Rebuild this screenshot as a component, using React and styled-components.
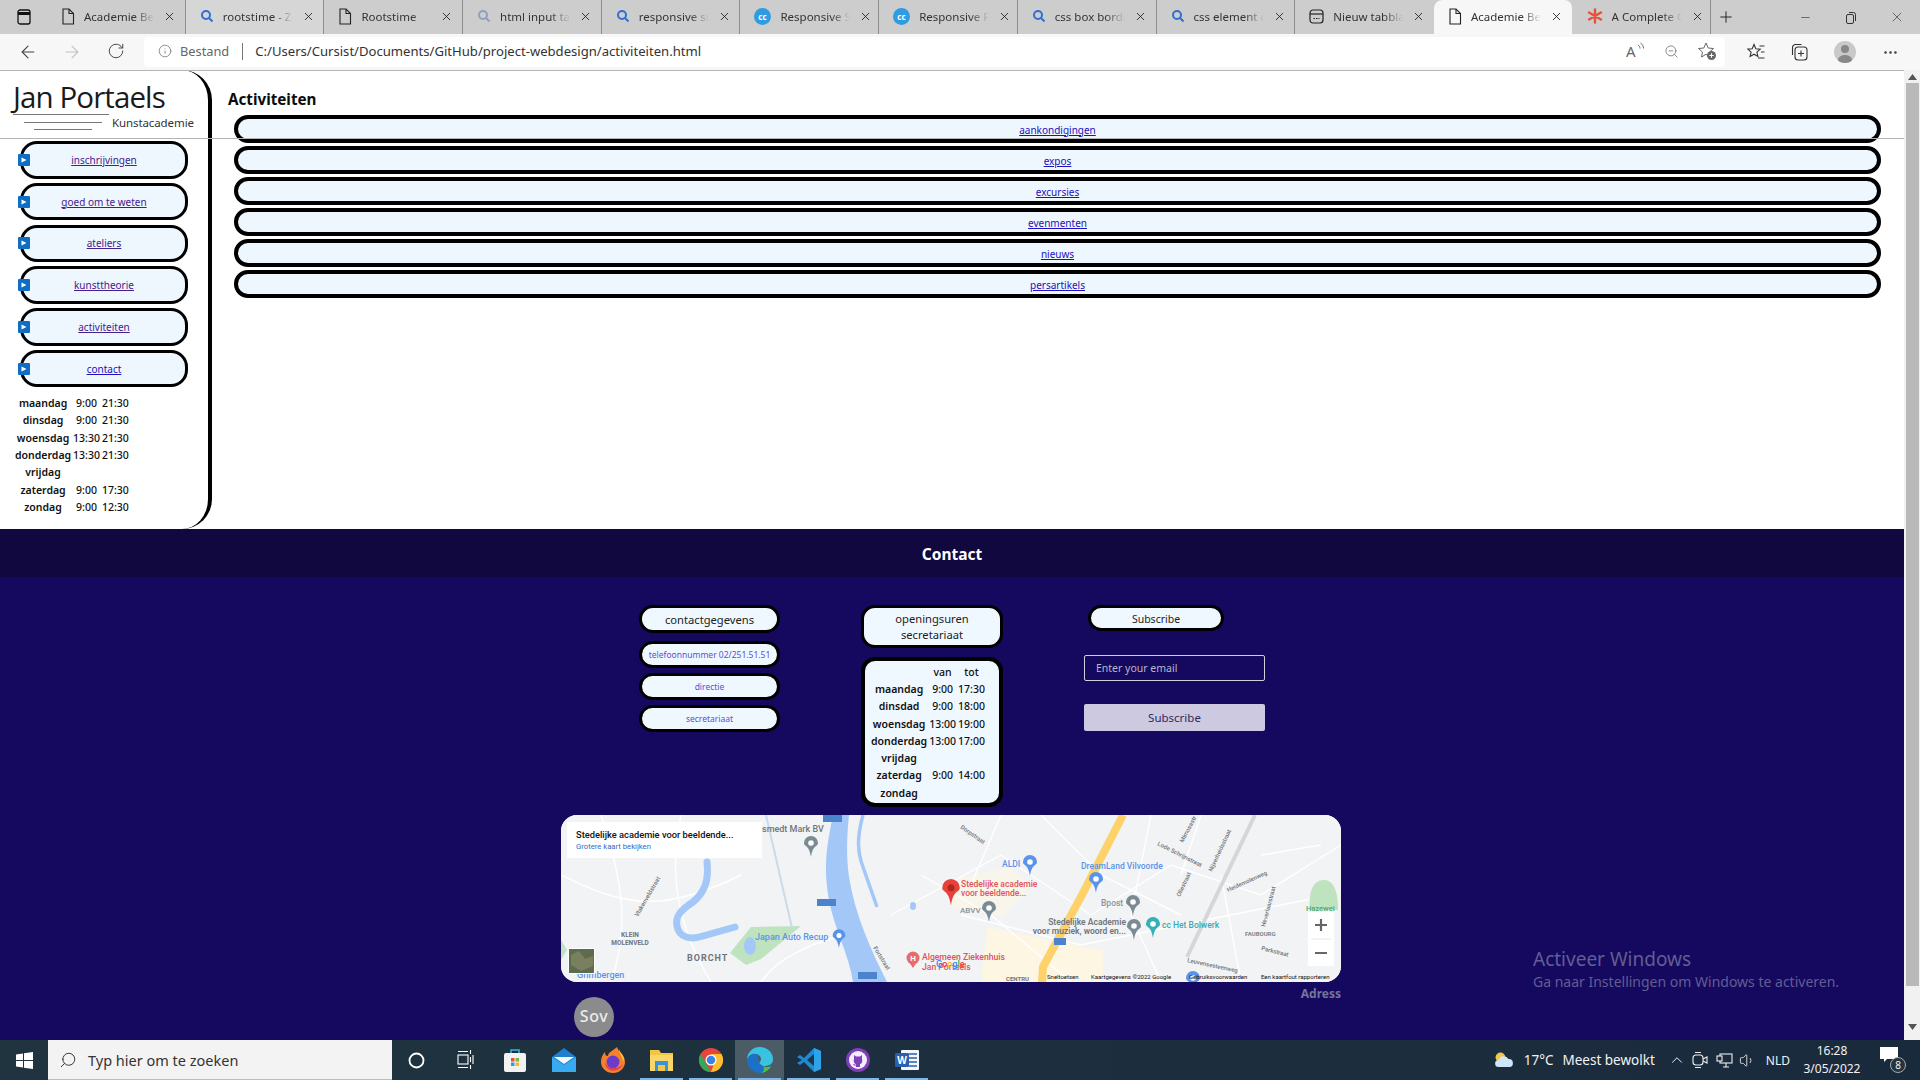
import styled, { createGlobalStyle } from 'styled-components';
import {
  ArrowLeft,
  ArrowRight,
  ChevronUp,
  Ellipsis,
  Info,
  Minus,
  Plus,
  RotateCw,
  Search,
  Volume1,
  X,
  ZoomOut,
} from 'lucide-react';

const FONT = '"Noto Sans", "Open Sans", sans-serif';

const GlobalStyle = createGlobalStyle`
  html, body { margin: 0; padding: 0; height: 100%; overflow: hidden; background: #fff; }
  body { font-family: ${FONT}; }
  * { box-sizing: border-box; }
`;

const Screen = styled.div`
  width: 1920px;
  height: 1080px;
  display: flex;
  flex-direction: column;
  overflow: hidden;
`;

/* browser chrome */
const TabBar = styled.div`
  height: 34px;
  background: #cdcdcd;
  display: flex;
  align-items: stretch;
  flex: none;
`;

const TabMenu = styled.div`
  width: 47px;
  display: flex;
  align-items: center;
  justify-content: center;
`;

const Tab = styled.div`
  width: 138.7px;
  flex: none;
  height: 34px;
  position: relative;
  display: flex;
  align-items: center;
  padding: 0 0 2px 14px;
  gap: 9px;
  background: ${(p) => (p.$active ? '#f7f7f7' : p.$hover ? '#d6d6d6' : 'transparent')};
  border-radius: ${(p) => (p.$active ? '8px 8px 0 0' : '0')};
  border-right: 1px solid ${(p) => (p.$active || p.$noLine ? 'transparent' : '#8e8e8e')};
  background-clip: padding-box;
`;

const TabTitle = styled.span`
  width: 70px;
  font-size: 11.5px;
  color: #333;
  white-space: nowrap;
  overflow: hidden;
  -webkit-mask-image: linear-gradient(to right, #000 72%, transparent 100%);
  mask-image: linear-gradient(to right, #000 72%, transparent 100%);
`;

const TabClose = styled.span`
  display: flex;
  color: #222;
`;

const NewTab = styled.div`
  width: 30px;
  display: flex;
  align-items: center;
  justify-content: center;
`;

const WindowControls = styled.div`
  margin-left: auto;
  display: flex;
  align-items: center;
`;

const WindowButton = styled.div`
  width: 46px;
  display: flex;
  justify-content: center;
  color: #333;
`;

const Toolbar = styled.div`
  height: 36px;
  background: #f7f7f7;
  display: flex;
  align-items: center;
  flex: none;
`;

const NavButton = styled.div`
  width: 44px;
  display: flex;
  justify-content: center;
  color: ${(p) => (p.$off ? '#c0c0c0' : '#444')};
`;

const NavGroup = styled.div`
  display: flex;
  padding-left: 6px;
  width: 144px;
`;

const AddressBar = styled.div`
  width: 1581px;
  height: 30px;
  background: #fff;
  border-radius: 4px;
  display: flex;
  align-items: center;
  padding: 0 0 2px 14px;
  font-size: 13.1px;
  color: #333;
`;

const Bestand = styled.span`
  margin-left: 8px;
  font-size: 12.800px;
  color: #666;
`;

const AddressSep = styled.span`
  width: 1px;
  height: 17px;
  background: #777;
  margin: 0 12px 0 13px;
`;

const AddressIcons = styled.div`
  margin-left: auto;
  display: flex;
  gap: 18px;
  padding-right: 8px;
  color: #666;
  align-items: center;
`;

const ToolIcons = styled.div`
  display: flex;
  align-items: center;
  color: #333;
  flex: 1;
  padding-left: 22px;
  gap: 26px;
`;

const Avatar = styled.div`
  width: 22px;
  height: 22px;
  border-radius: 50%;
  background: #c9c9c9;
  overflow: hidden;
`;

/* page */
const Viewport = styled.div`
  flex: 1;
  min-height: 0;
  display: flex;
  position: relative;
`;

const Page = styled.div`
  flex: 1;
  min-width: 0;
  display: flex;
  flex-direction: column;
  position: relative;
  overflow: hidden;
`;

const Scrollbar = styled.div`
  width: 16px;
  background: #f1f1f1;
  display: flex;
  flex-direction: column;
  align-items: center;
  color: #555;
  padding-top: 4px;
`;

const ScrollThumb = styled.div`
  width: 13px;
  height: 903px;
  background: #b9b9b9;
  margin: 3px 0 38px;
`;

const TopLine = styled.div`
  position: absolute;
  left: 0;
  right: 0;
  top: ${(p) => p.$top}px;
  height: 1px;
  background: #b4b4b4;
  z-index: 3;
`;

const TopSection = styled.div`
  height: 459px;
  flex: none;
  display: flex;
  background: #fff;
`;

const Sidebar = styled.aside`
  width: 212px;
  flex: none;
  border-right: 4px solid #000;
  border-radius: 0 30px 30px 0;
  display: flex;
  flex-direction: column;
`;

const Logo = styled.div`
  height: 71px;
  position: relative;
  padding: 7px 0 0 13px;
`;

const LogoName = styled.div`
  font-family: "Open Sans", sans-serif;
  font-weight: 400;
  font-size: 29.5px;
  line-height: 40px;
  letter-spacing: -0.9px;
  color: #1a1a1a;
`;

const LogoSub = styled.span`
  position: absolute;
  left: 112px;
  top: 45px;
  font-size: 11.5px;
  letter-spacing: -0.1px;
  color: #333;
`;

const LogoRule = styled.span`
  position: absolute;
  left: ${(p) => p.$left}px;
  top: ${(p) => p.$top}px;
  width: ${(p) => p.$width}px;
  height: 1px;
  background: #777;
`;

const SideNav = styled.nav`
  display: flex;
  flex-direction: column;
  gap: 4.3px;
  padding-left: 20px;
`;

const NavPill = styled.div`
  width: 168px;
  height: 37.5px;
  position: relative;
  border: 3px solid #000;
  border-radius: 17px;
  background: #eef6fe;
  display: flex;
  align-items: center;
  justify-content: center;
`;

const PillMarker = styled.span`
  position: absolute;
  left: -5px;
  top: 50%;
  margin-top: -6px;
  width: 12px;
  height: 12px;
  background: #0f6dc4;
  display: flex;
  align-items: center;
  justify-content: center;
  border-radius: 1px;
`;

const PageLink = styled.a`
  font-size: ${(p) => p.$size || 10}px;
  color: ${(p) => (p.$visited ? '#44208f' : '#1c10c0')};
  text-decoration: underline;
`;

const HoursTable = styled.table`
  border-collapse: separate;
  border-spacing: 2px 0;
  font-size: 10.5px;
  font-weight: 600;
  color: #111;
  text-align: center;

  td, th {
    padding: 0;
    height: 17.3px;
    font-weight: 600;
    white-space: nowrap;
  }
  td:nth-child(2), td:nth-child(3) {
    font-weight: 500;
  }
`;

const SideHours = styled.div`
  margin: 7px 0 0 13px;
`;

const Content = styled.main`
  flex: 1;
  min-width: 0;
  padding: 17px 23px 0 22px;
`;

const PageTitle = styled.h1`
  margin: 0 0 4px -6px;
  font-size: 15.2px;
  line-height: 24px;
  font-weight: 700;
  color: #0c0c0c;
`;

const BarList = styled.div`
  display: flex;
  flex-direction: column;
  gap: 3px;
`;

const BarLink = styled.div`
  height: 28px;
  border: 4px solid #000;
  border-radius: 14px;
  background: #eef6fe;
  display: flex;
  align-items: center;
  justify-content: center;
  padding-top: 1px;
`;

/* footer */
const Footer = styled.footer`
  flex: 1;
  min-height: 0;
  background: #14095e;
  display: flex;
  flex-direction: column;
`;

const FooterBand = styled.div`
  height: 48px;
  flex: none;
  padding-top: 2px;
  background: #110840;
  color: #fff;
  font-size: 15.5px;
  font-weight: 700;
  display: flex;
  align-items: center;
  justify-content: center;
`;

const FooterColumns = styled.div`
  display: flex;
  justify-content: center;
  gap: 81px;
  height: 238px;
  padding-top: 28px;
  flex: none;
`;

const ContactCol = styled.div`
  width: 141px;
  display: flex;
  flex-direction: column;
  gap: 5px;
`;

const HoursCol = styled.div`
  width: 142px;
  display: flex;
  flex-direction: column;
  gap: 9px;
`;

const SubscribeCol = styled.div`
  width: 181px;
  display: flex;
  flex-direction: column;
`;

const FooterPill = styled.div`
  height: ${(p) => p.$height}px;
  width: ${(p) => p.$width || '100%'};
  margin-left: ${(p) => p.$left || 0}px;
  margin-bottom: ${(p) => p.$below || 0}px;
  padding-top: 1px;
  border: 3px solid #000;
  border-radius: 14px;
  background: #f0f8ff;
  display: flex;
  align-items: center;
  justify-content: center;
  text-align: center;
  font-size: ${(p) => p.$size || 11.2}px;
  line-height: 16px;
  color: ${(p) => p.$color || '#222'};
  white-space: nowrap;
  flex: none;
`;

const HoursCard = styled.div`
  height: 150px;
  border: 4px solid #000;
  border-radius: 14px;
  background: #f0f8ff;
  display: flex;
  justify-content: center;
  padding: 2px 8px 0 0;
`;

const EmailInput = styled.input`
  height: 26px;
  margin-top: 24px;
  border: 1px solid #d0cfe0;
  border-radius: 2px;
  background: transparent;
  padding: 0 11px;
  font-family: ${FONT};
  font-size: 10.5px;
  color: #fff;

  &::placeholder {
    color: #b9b7cc;
    opacity: 1;
  }
`;

const SubscribeButton = styled.button`
  height: 27px;
  margin-top: 23px;
  border: none;
  border-radius: 2px;
  background: #cdc9e0;
  font-family: ${FONT};
  font-size: 11.5px;
  color: #2f2a5c;
`;

const MapArea = styled.div`
  width: 780px;
  margin-left: 561px;
  flex: none;
`;

const MapFrame = styled.div`
  width: 780px;
  height: 167px;
  border-radius: 16px;
  overflow: hidden;
  background: #f2f3f5;
`;

const MapSvg = styled.svg`
  display: block;
  font-family: Roboto, sans-serif;
`;

const MapFoot = styled.div`
  display: flex;
  justify-content: space-between;
  align-items: flex-start;
  padding-left: 13px;
`;

const SovBadge = styled.div`
  width: 40px;
  height: 40px;
  margin-top: 15px;
  border-radius: 50%;
  background: #8b8a8c;
  color: #ececec;
  font-size: 16px;
  font-weight: 500;
  display: flex;
  align-items: center;
  justify-content: center;
  letter-spacing: 0.6px;
  padding-bottom: 3px;
`;

const AddressLabel = styled.span`
  margin-top: 3px;
  font-size: 12px;
  font-weight: 700;
  color: #77749b;
`;

const ActivateNote = styled.div`
  position: absolute;
  left: 1533px;
  top: 876px;
  color: #625d93;
  z-index: 2;
`;

const ActivateTitle = styled.div`
  font-size: 19px;
  line-height: 26px;
`;

const ActivateText = styled.div`
  font-size: 14px;
  line-height: 20px;
`;

/* taskbar */
const Taskbar = styled.div`
  height: 40px;
  flex: none;
  display: flex;
  align-items: center;
  background: linear-gradient(to right, #20343f, #1a2a3d);
  color: #fff;
`;

const StartButton = styled.div`
  width: 48px;
  display: flex;
  justify-content: center;
`;

const SearchBox = styled.div`
  width: 344px;
  height: 40px;
  background: #f3f3f3;
  border-bottom: 1px solid #bbb;
  display: flex;
  align-items: center;
  padding-left: 11px;
  gap: 11px;
  color: #333;
  font-size: 14.5px;
`;

const TaskItem = styled.div`
  width: 49px;
  height: 40px;
  flex: none;
  position: relative;
  display: flex;
  align-items: center;
  justify-content: center;
  background: ${(p) => (p.$active ? '#4c5c66' : 'transparent')};

  &::after {
    content: '';
    display: ${(p) => (p.$running ? 'block' : 'none')};
    position: absolute;
    bottom: 0;
    left: 3px;
    right: 3px;
    height: 2px;
    background: #7cb9ea;
  }
`;

const Tray = styled.div`
  margin-left: auto;
  display: flex;
  align-items: center;
  height: 40px;
  font-size: 14px;
  color: #f2f2f2;
`;

const TrayText = styled.span`
  margin-left: ${(p) => p.$left || 0}px;
  font-size: ${(p) => p.$size || 13.5}px;
  white-space: nowrap;
`;

const TrayIcon = styled.span`
  display: flex;
  margin-left: ${(p) => p.$left || 0}px;
`;

const Clock = styled.div`
  width: 72px;
  margin-left: 6px;
  text-align: center;
  font-size: 12px;
  line-height: 18px;
`;

const NotifyWrap = styled.div`
  position: relative;
  width: 26px;
  height: 26px;
  margin: 0 14px 0 12px;
`;

const NotifyCount = styled.span`
  position: absolute;
  right: 0;
  bottom: 0;
  width: 16px;
  height: 16px;
  border-radius: 50%;
  border: 1px solid #aaa;
  background: #25323f;
  font-size: 10px;
  line-height: 14px;
  text-align: center;
`;

const PageIcon = () => (
  <svg width="14" height="17" viewBox="0 0 14 17" fill="none" stroke="#222" strokeWidth="1.1">
    <path d="M2 1h6l4.500 4.500V16H2z" />
    <path d="M8 1v4.500h4.500" />
  </svg>
);

const SearchTabIcon = ({ faded }) => (
  <svg width="14" height="14" viewBox="0 0 14 14" fill="none" stroke={faded ? '#8c9fc0' : '#2f6fd0'} strokeWidth="2">
    <circle cx="6" cy="6" r="4" />
    <path d="M9 9l3.500 3.500" />
  </svg>
);

const CcIcon = () => (
  <svg width="17" height="17" viewBox="0 0 17 17">
    <circle cx="8.500" cy="8.500" r="8.500" fill="#2f9be0" />
    <text x="8.500" y="11.500" fontSize="8" fontWeight="700" fill="#fff" textAnchor="middle" fontFamily="Noto Sans">cc</text>
  </svg>
);

const NewTabIcon = () => (
  <svg width="15" height="15" viewBox="0 0 15 15" fill="none" stroke="#222" strokeWidth="1.2">
    <rect x="1" y="1" width="13" height="13" rx="3" />
    <path d="M1 5h13" />
    <path d="M4.500 9.500h6" strokeDasharray="1.500 1" />
  </svg>
);

const AsteriskIcon = () => (
  <svg width="16" height="16" viewBox="0 0 16 16" stroke="#e8503a" strokeWidth="2.400" strokeLinecap="round">
    <path d="M8 1.500v13M2 4.500l12 7M14 4.500l-12 7" />
  </svg>
);

const RestoreIcon = () => (
  <svg width="12" height="13" viewBox="0 0 12 13" fill="none" stroke="#333" strokeWidth="1">
    <rect x="1.500" y="3.500" width="7" height="9" rx="1.500" />
    <path d="M4 1.500h4.500a2 2 0 0 1 2 2V10" />
  </svg>
);

const ReadAloudIcon = () => (
  <svg width="20" height="18" viewBox="0 0 20 18" fill="none" stroke="#666" strokeWidth="1">
    <text x="0" y="15" fontSize="15" fill="#666" stroke="none" fontFamily="Noto Sans">A</text>
    <path d="M12 3c1.500 1 2 2 2 3.500M14.500 1c2 1.500 3 3 3 5.500" />
  </svg>
);

const StarPlusIcon = () => (
  <svg width="20" height="20" viewBox="0 0 20 20" fill="none" stroke="#666" strokeWidth="1">
    <path d="M9 2l2.200 5 5.300.5-4 3.500 1 5-4.500-2.700L4.500 16l1-5-4-3.500L6.800 7z" />
    <circle cx="14.500" cy="14.500" r="4.500" fill="#666" stroke="none" />
    <path d="M14.500 12.300v4.400M12.300 14.500h4.400" stroke="#fff" />
  </svg>
);

const FavoritesIcon = () => (
  <svg width="18" height="18" viewBox="0 0 18 18" fill="none" stroke="#333" strokeWidth="1.100">
    <path d="M7 1.500l1.800 4.200 4.400.4-3.300 3 1 4.400L7 11.200l-3.900 2.300 1-4.400-3.300-3 4.400-.4z" />
    <path d="M12.500 3h5M14 9h3.500M11 15h6.500" />
  </svg>
);

const CollectionsIcon = () => (
  <svg width="17" height="18" viewBox="0 0 17 18" fill="none" stroke="#333" strokeWidth="1.100">
    <rect x="4" y="4" width="12" height="13" rx="3" />
    <path d="M10 7.500v6M7 10.500h6" />
    <path d="M1.500 12V5a3 3 0 0 1 3-3.500h6" />
  </svg>
);

const ScrollDown = () => (
  <svg width="9" height="6" viewBox="0 0 9 6" fill="#555">
    <path d="M0 0h9L4.500 6z" />
  </svg>
);

const ScrollUp = () => (
  <svg width="9" height="6" viewBox="0 0 9 6" fill="#555">
    <path d="M0 6h9L4.500 0z" />
  </svg>
);

const TABS = [
  { icon: <PageIcon />, title: 'Academie Beeldende' },
  { icon: <SearchTabIcon />, title: 'rootstime - Zoeken', hover: true },
  { icon: <PageIcon />, title: 'Rootstime' },
  { icon: <SearchTabIcon faded />, title: 'html input tag' },
  { icon: <SearchTabIcon />, title: 'responsive sidebar' },
  { icon: <CcIcon />, title: 'Responsive Sidebar' },
  { icon: <CcIcon />, title: 'Responsive Footer' },
  { icon: <SearchTabIcon />, title: 'css box border' },
  { icon: <SearchTabIcon />, title: 'css element center' },
  { icon: <NewTabIcon />, title: 'Nieuw tabblad', noLine: true },
  { icon: <PageIcon />, title: 'Academie Beeldende', active: true },
  { icon: <AsteriskIcon />, title: 'A Complete Guide' },
];

const NAV = [
  { label: 'inschrijvingen', visited: true },
  { label: 'goed om te weten', visited: true },
  { label: 'ateliers', visited: true },
  { label: 'kunsttheorie', visited: true },
  { label: 'activiteiten', visited: true },
  { label: 'contact', visited: false },
];

const ACTIVITIES = ['aankondigingen', 'expos', 'excursies', 'evenmenten', 'nieuws', 'persartikels'];

const SIDE_HOURS = [
  ['maandag', '9:00', '21:30'],
  ['dinsdag', '9:00', '21:30'],
  ['woensdag', '13:30', '21:30'],
  ['donderdag', '13:30', '21:30'],
  ['vrijdag', '', ''],
  ['zaterdag', '9:00', '17:30'],
  ['zondag', '9:00', '12:30'],
];

const OFFICE_HOURS = [
  ['', 'van', 'tot'],
  ['maandag', '9:00', '17:30'],
  ['dinsdad', '9:00', '18:00'],
  ['woensdag', '13:00', '19:00'],
  ['donderdag', '13:00', '17:00'],
  ['vrijdag', '', ''],
  ['zaterdag', '9:00', '14:00'],
  ['zondag', '', ''],
];

const Hours = ({ rows }) => (
  <HoursTable>
    <tbody>
      {rows.map((row, i) => (
        <tr key={i}>
          {row.map((cell, j) => (
            <td key={j}>{cell}</td>
          ))}
        </tr>
      ))}
    </tbody>
  </HoursTable>
);

const MapPin = ({ x, y, color, size = 1, dot = '#fff' }) => (
  <g transform={`translate(${x} ${y}) scale(${size})`}>
    <path d="M0 9C-2-4-7-1-7-5a7 7 0 1 1 14 0C7-1 2-4 0 9z" fill={color} />
    <circle cx="0" cy="-5" r="2.800" fill={dot} />
  </g>
);

const MapLabel = ({ x, y, color = '#70757a', size = 8, weight = 500, anchor = 'start', rotate, spacing, children }) => (
  <text
    x={x}
    y={y}
    fill={color}
    fontSize={size}
    fontWeight={weight}
    textAnchor={anchor}
    letterSpacing={spacing}
    transform={rotate ? `rotate(${rotate} ${x} ${y})` : undefined}
  >
    {children}
  </text>
);

const RoadShield = ({ x, y, label, w = 19 }) => (
  <g>
    <rect x={x} y={y} width={w} height="7" fill="#4d82cc" />
    <text x={x + w / 2} y={y + 5.500} fontSize="5" fill="#fff" textAnchor="middle">{label}</text>
  </g>
);

// google maps embed, redrawn
const MapDrawing = () => (
  <MapSvg width="780" height="167" viewBox="0 0 780 167">
    <rect width="780" height="167" fill="#f2f3f5" />
    <path d="M426 112l116 24v31H420z" fill="#fdf6e3" />
    <path d="M400 62l50-10 20 20-30 30-50-10z" fill="#f8f5ea" />
    <g fill="none" stroke="#fff" strokeWidth="1.400">
      <path d="M0 60C60 90 100 100 180 60M40 0c20 60 30 110 10 167M120 0c-10 50-10 100 30 167M200 167c20-30 60-40 90-50" />
      <path d="M330 100l110-60 90 60 80-50 90 30 80-50M360 60l70 40 80 67M440 0l-30 70M590 0l-20 100 30 67M660 60l20 107" />
      <path d="M400 100l120 30 100-20 150-30M480 0l60 60 80 40M640 0l-20 60M700 40l60-10" />
    </g>
    <path d="M272 0C266 30 262 50 268 85c4 25 20 55 24 82h34C310 135 294 100 288 62 285 40 286 20 288 0z" fill="#a3c7f7" />
    <path d="M302 0c-6 22-6 36 0 52l14 40" fill="none" stroke="#a3c7f7" strokeWidth="3.500" />
    <path d="M146 47c2 18-2 30-14 40-12 8-18 14-16 24 2 12 14 14 26 10l32-9" fill="none" stroke="#a3c7f7" strokeWidth="7" strokeLinecap="round" />
    <path d="M169 138l21-26 50-1-40 33-15 6z" fill="#bfe3bf" />
    <ellipse cx="189" cy="131" rx="6" ry="9" fill="#a3c7f7" />
    <path d="M205 0l26 113" stroke="#c9dbe8" strokeWidth="2" fill="none" />
    <ellipse cx="352" cy="91" rx="3" ry="4" fill="#a3c7f7" />
    <path d="M694 0L626 142" stroke="#d5d6da" strokeWidth="4" fill="none" />
    <path d="M562 0L522 78 482 152l-1 15" stroke="#fdd26a" strokeWidth="8" fill="none" />
    <path d="M749 95c-2-20 4-30 14-30s14 12 14 30z" fill="#bfe3bf" />
    <path d="M0 125l6 10-6 10z" fill="#bfe3bf" />

    <MapLabel x="201" y="17" size="9">smedt Mark BV</MapLabel>
    <MapPin x="250" y="33" color="#7b8b94" />
    <MapLabel x="69" y="122" size="6.500" weight={700} anchor="middle">KLEIN</MapLabel>
    <MapLabel x="69" y="129.500" size="6.500" weight={700} anchor="middle">MOLENVELD</MapLabel>
    <MapLabel x="126" y="146" size="9" weight={700} spacing="1">BORCHT</MapLabel>
    <MapLabel x="194" y="125" size="9" color="#5a93ea">Japan Auto Recup</MapLabel>
    <MapPin x="278" y="125" color="#5a93ea" size="0.900" />
    <MapLabel x="16" y="163" size="9" color="#5a93ea">Grimbergen</MapLabel>
    <MapLabel x="77" y="102" size="6" rotate="-60">Vlakenveldstraat</MapLabel>
    <MapLabel x="312" y="133" size="6" rotate="58">Fortstraat</MapLabel>
    <RoadShield x="262" y="0" label="N260" />
    <RoadShield x="256" y="84" label="N260" />
    <RoadShield x="297" y="157" label="N260" />
    <RoadShield x="493" y="123" label="R1" w="12" />

    <MapPin x="390" y="79" color="#e8403a" size="1.250" dot="#b3261e" />
    <MapLabel x="400" y="72" size="8.500" color="#e0545a">Stedelijke academie</MapLabel>
    <MapLabel x="400" y="81" size="8.500" color="#e0545a">voor beeldende...</MapLabel>
    <MapLabel x="399" y="98" size="8" color="#8a9299">ABVV</MapLabel>
    <MapPin x="428" y="98" color="#7b8b94" />
    <MapLabel x="441" y="52" size="8.500" color="#5a93ea">ALDI</MapLabel>
    <MapPin x="469" y="52" color="#5a93ea" />
    <MapLabel x="520" y="54" size="8.500" color="#5a93ea">DreamLand Vilvoorde</MapLabel>
    <MapPin x="535" y="69" color="#5a93ea" />
    <MapLabel x="540" y="91" size="8.500" color="#8a9299">Bpost</MapLabel>
    <MapPin x="572" y="92" color="#7b8b94" />
    <MapLabel x="565" y="110" size="8.500" weight={600} anchor="end">Stedelijke Academie</MapLabel>
    <MapLabel x="565" y="119" size="8.500" weight={600} anchor="end">voor muziek, woord en...</MapLabel>
    <MapPin x="573" y="116" color="#7b8b94" />
    <MapPin x="592" y="114" color="#35b0b8" />
    <MapLabel x="601" y="113" size="8.500" color="#35aab4">cc Het Bolwerk</MapLabel>
    <MapLabel x="684" y="121" size="6" weight={700} color="#80868b">FAUBOURG</MapLabel>
    <MapLabel x="745" y="96" size="7.500" color="#4aa76a">Hazewei</MapLabel>
    <MapLabel x="361" y="145" size="8.600" color="#e0545a">Algemeen Ziekenhuis</MapLabel>
    <MapLabel x="361" y="155" size="8.600" color="#e0545a">Jan Portaels</MapLabel>
    <circle cx="352" cy="143" r="6.500" fill="#e86a6a" />
    <path d="M352 153l-4-6h8z" fill="#e86a6a" />
    <text x="352" y="146" fontSize="8" fontWeight="700" fill="#fff" textAnchor="middle">H</text>
    <text x="375" y="152" fontSize="9" fontWeight="500">
      <tspan fill="#4285f4">G</tspan>
      <tspan fill="#ea4335">o</tspan>
      <tspan fill="#fbbc05">o</tspan>
      <tspan fill="#4285f4">g</tspan>
      <tspan fill="#34a853">l</tspan>
      <tspan fill="#ea4335">e</tspan>
    </text>
    <MapLabel x="596" y="30" size="6" rotate="27">Lode Schrijnstraat</MapLabel>
    <MapLabel x="651" y="57" size="6" rotate="-65">Nijverheidsstraat</MapLabel>
    <MapLabel x="667" y="77" size="6" rotate="-24">Heidemolenweg</MapLabel>
    <MapLabel x="704" y="112" size="6" rotate="-75">Heverlaarstraat</MapLabel>
    <MapLabel x="619" y="82" size="6" rotate="-65">Oliestraat</MapLabel>
    <MapLabel x="622" y="28" size="6" rotate="-62">Mimosastr</MapLabel>
    <MapLabel x="399" y="13" size="6" rotate="35">Dorpstraat</MapLabel>
    <MapLabel x="626" y="147" size="6" rotate="12">Leuvensesteenweg</MapLabel>
    <MapLabel x="700" y="135" size="6" rotate="14">Parkstraat</MapLabel>
    <MapLabel x="445" y="166" size="6" weight={700}>CENTRU</MapLabel>
    <MapPin x="632" y="168" color="#5a93ea" />

    <rect x="6" y="7" width="195" height="36" fill="#fff" />
    <text x="15" y="22.500" fontSize="9.300" fill="#111" fontWeight="500">Stedelijke academie voor beeldende...</text>
    <text x="15" y="34" fontSize="7.700" fill="#3a67c8">Grotere kaart bekijken</text>

    <rect x="7" y="133" width="27" height="26" fill="#fff" />
    <rect x="8" y="134" width="25" height="24" fill="#5f6b4d" />
    <path d="M10 140l8-4 6 8 8-3v10l-12 5-10-6z" fill="#78805f" />

    <rect x="747" y="97" width="26" height="54" fill="#fff" />
    <path d="M754 110h12M760 104v12M754 138h12" stroke="#666" strokeWidth="2.200" />
    <path d="M750 124h20" stroke="#e6e6e6" strokeWidth="1" />

    <g fontSize="6" fill="#111">
      <text x="486" y="164">Sneltoetsen</text>
      <text x="530" y="164">Kaartgegevens ©2022 Google</text>
      <text x="628" y="164">Gebruiksvoorwaarden</text>
      <text x="700" y="164">Een kaartfout rapporteren</text>
    </g>
  </MapSvg>
);

const WinLogo = () => (
  <svg width="17" height="17" viewBox="0 0 17 17" fill="#fff">
    <path d="M0 2.400l7-1v6.600H0zM8 1.300L17 0v8H8zM0 9h7v6.600l-7-1zM8 9h9v8l-9-1.300z" />
  </svg>
);

const TaskView = () => (
  <svg width="17" height="22" viewBox="0 0 17 22" fill="none" stroke="#fff" strokeWidth="1.100">
    <rect x="1" y="6" width="10" height="9" />
    <path d="M1 2.500h10M1 18.500h10M13.500 1v4M13.500 8v5M13.500 16v4M16 6v9" />
  </svg>
);

const StoreIcon = () => (
  <svg width="22" height="24" viewBox="0 0 22 24">
    <path d="M7 6V2h8v4" fill="none" stroke="#35b4e8" strokeWidth="1.500" />
    <rect x="0" y="5" width="22" height="19" rx="2" fill="#f2f2f2" />
    <rect x="7" y="10" width="3.500" height="3.500" fill="#e8503a" />
    <rect x="11.500" y="10" width="3.500" height="3.500" fill="#7cb83a" />
    <rect x="7" y="14.500" width="3.500" height="3.500" fill="#2f9be0" />
    <rect x="11.500" y="14.500" width="3.500" height="3.500" fill="#f8b92a" />
  </svg>
);

const MailIcon = () => (
  <svg width="24" height="24" viewBox="0 0 24 24">
    <path d="M0 9L12 0l12 9v15H0z" fill="#1c7fd0" />
    <path d="M0 9l12 8 12-8v15H0z" fill="#39a9f0" />
    <path d="M2 9h20l-10 7z" fill="#f4f8fc" />
  </svg>
);

const FirefoxIcon = () => (
  <svg width="24" height="26" viewBox="0 0 24 26">
    <path d="M16 0c1 5 8 7 8 15a12 11 0 1 1-24 0C0 10 2 7 4 5c0 3 1 4 3 4 0-4 5-5 9-9z" fill="#f5812e" />
    <path d="M18 2c1 4 6 7 5 13-2-5-5-9-5-13z" fill="#fbc02d" />
    <circle cx="12" cy="15" r="6.500" fill="#6d3bc9" />
    <path d="M4 15c2 7 12 9 18 2-2 8-18 10-18-2z" fill="#e63a5c" />
  </svg>
);

const FolderIcon = () => (
  <svg width="23" height="22" viewBox="0 0 23 22">
    <path d="M0 1h9l2 3h12v18H0z" fill="#f2c644" />
    <rect x="0" y="6" width="23" height="16" fill="#f8d667" />
    <rect x="5" y="12" width="13" height="10" fill="#3a92d8" />
    <rect x="8" y="16" width="7" height="6" fill="#f2c644" />
  </svg>
);

const ChromeIcon = () => (
  <svg width="24" height="24" viewBox="0 0 24 24">
    <circle cx="12" cy="12" r="12" fill="#e8453a" />
    <path d="M12 24A12 12 0 0 1 1.600 6l6 10.400L12 24z" fill="#34a853" />
    <path d="M12 24a12 12 0 0 0 10.400-18H12l4 7z" fill="#fbc02d" />
    <circle cx="12" cy="12" r="5.500" fill="#fff" />
    <circle cx="12" cy="12" r="4.300" fill="#3b82e6" />
  </svg>
);

const EdgeIcon = () => (
  <svg width="26" height="26" viewBox="0 0 26 26">
    <path d="M13 0c8 0 13 6 13 12 0 5-4 7-8 7-3 0-6-1-6-3 0-1 2-1 2-4 0-3-3-5-6-5C4 7 1 10 0 13 0 6 5 0 13 0z" fill="#39c3e0" />
    <path d="M0 13c1-4 5-7 8-6 5 0 1 9 8 12 3 2 6 1 8 0-2 4-6 7-11 7C6 26 0 20 0 13z" fill="#1c70c8" />
    <path d="M16 19c3 2 6 1 8 0-2 4-6 7-11 7 4-1 5-4 3-7z" fill="#4fc04f" />
  </svg>
);

const VsCodeIcon = () => (
  <svg width="24" height="24" viewBox="0 0 24 24">
    <path d="M17 0l7 3v18l-7 3L7 14l-4 3-3-2 5-3-5-3 3-2 4 3z" fill="#1f8ad2" />
    <path d="M17 0l7 3v18l-7 3z" fill="#2ba4ea" />
    <path d="M17 6v12l-7-6z" fill="#20344a" />
  </svg>
);

const GithubIcon = () => (
  <svg width="24" height="24" viewBox="0 0 24 24">
    <circle cx="12" cy="12" r="12" fill="#7e3fb8" />
    <circle cx="12" cy="12" r="9" fill="#f4eefa" />
    <path d="M8 7l2 1.500h4L16 7v4c1 3-1 5-2 5v3h-4v-1.500c-2 .5-3-1-3-1.500 1 0 2 1 3 .5V16c-1 0-3-2-2-5z" fill="#7e3fb8" />
  </svg>
);

const WordIcon = () => (
  <svg width="24" height="24" viewBox="0 0 24 24">
    <rect x="6" y="2" width="18" height="20" rx="1" fill="#f2f6fb" />
    <path d="M14 6h8M14 10h8M14 14h8M14 18h8" stroke="#2b5fb0" strokeWidth="1.600" />
    <rect x="0" y="5" width="14" height="14" rx="1" fill="#2b5fb0" />
    <text x="7" y="15.500" fontSize="10" fontWeight="700" fill="#fff" textAnchor="middle" fontFamily="Noto Sans">W</text>
  </svg>
);

const CloudIcon = () => (
  <svg width="20" height="16" viewBox="0 0 22 18">
    <circle cx="7" cy="6" r="5.500" fill="#f5c644" />
    <path d="M5 17a4 4 0 0 1 0-8 6 6 0 0 1 11-1 4.500 4.500 0 0 1 1 9z" fill="#cfe6f7" />
  </svg>
);

const TrayMeet = () => (
  <svg width="17" height="18" viewBox="0 0 17 18" fill="none" stroke="#eee" strokeWidth="1.100">
    <rect x="1" y="4" width="10" height="10" rx="3" />
    <path d="M11 8l4-2v6l-4-2M3 1.500h6M3 16.500h6" />
  </svg>
);

const TrayNetwork = () => (
  <svg width="17" height="15" viewBox="0 0 17 15" fill="none" stroke="#eee" strokeWidth="1.100">
    <rect x="4" y="1" width="12" height="9" />
    <rect x="1" y="3" width="5" height="5" fill="#1b2a3d" />
    <path d="M10 10v4M7 14h6" />
  </svg>
);

const App = () => {
  return (
    <Screen>
      <GlobalStyle />
      <TabBar>
        <TabMenu>
          <svg width="14" height="16" viewBox="0 0 14 16" fill="none" stroke="#111" strokeWidth="1.300">
            <rect x="1" y="1" width="12" height="14" rx="2" />
            <path d="M1 4.500h12" strokeWidth="3" />
          </svg>
        </TabMenu>
        {TABS.map((tab, i) => (
          <Tab key={i} $active={tab.active} $hover={tab.hover} $noLine={tab.noLine}>
            {tab.icon}
            <TabTitle>{tab.title}</TabTitle>
            <TabClose>
              <X size={13} strokeWidth={1.6} />
            </TabClose>
          </Tab>
        ))}
        <NewTab>
          <Plus size={18} strokeWidth={1.3} color="#222" />
        </NewTab>
        <WindowControls>
          <WindowButton>
            <Minus size={13} strokeWidth={1.2} />
          </WindowButton>
          <WindowButton>
            <RestoreIcon />
          </WindowButton>
          <WindowButton>
            <X size={16} strokeWidth={1} />
          </WindowButton>
        </WindowControls>
      </TabBar>

      <Toolbar>
        <NavGroup>
          <NavButton>
            <ArrowLeft size={20} strokeWidth={1.3} />
          </NavButton>
          <NavButton $off>
            <ArrowRight size={20} strokeWidth={1.3} />
          </NavButton>
          <NavButton>
            <RotateCw size={18} strokeWidth={1.3} />
          </NavButton>
        </NavGroup>
        <AddressBar>
          <Info size={14} strokeWidth={1.2} color="#666" />
          <Bestand>Bestand</Bestand>
          <AddressSep />
          C:/Users/Cursist/Documents/GitHub/project-webdesign/activiteiten.html
          <AddressIcons>
            <ReadAloudIcon />
            <ZoomOut size={15} strokeWidth={1.2} />
            <StarPlusIcon />
          </AddressIcons>
        </AddressBar>
        <ToolIcons>
          <FavoritesIcon />
          <CollectionsIcon />
          <Avatar>
            <svg width="22" height="22" viewBox="0 0 22 22" fill="#888">
              <circle cx="11" cy="8" r="4" />
              <ellipse cx="11" cy="19" rx="7" ry="5" />
            </svg>
          </Avatar>
          <Ellipsis size={17} strokeWidth={1.6} />
        </ToolIcons>
      </Toolbar>

      <Viewport>
        <Page>
          <TopLine $top={0} />
          <TopLine $top={68} />
          <TopSection>
            <Sidebar>
              <Logo>
                <LogoName>Jan Portaels</LogoName>
                <LogoRule $left={13} $top={44} $width={96} />
                <LogoRule $left={24} $top={52} $width={78} />
                <LogoRule $left={34} $top={59} $width={58} />
                <LogoSub>Kunstacademie</LogoSub>
              </Logo>
              <SideNav>
                {NAV.map((item) => (
                  <NavPill key={item.label}>
                    <PillMarker>
                      <svg width="6" height="6" viewBox="0 0 6 6" fill="#fff">
                        <path d="M0.500 0.500l5 2.500-5 2.500z" />
                      </svg>
                    </PillMarker>
                    <PageLink $visited={item.visited}>{item.label}</PageLink>
                  </NavPill>
                ))}
              </SideNav>
              <SideHours>
                <Hours rows={SIDE_HOURS} />
              </SideHours>
            </Sidebar>
            <Content>
              <PageTitle>Activiteiten</PageTitle>
              <BarList>
                {ACTIVITIES.map((item) => (
                  <BarLink key={item}>
                    <PageLink>{item}</PageLink>
                  </BarLink>
                ))}
              </BarList>
            </Content>
          </TopSection>

          <Footer>
            <FooterBand>Contact</FooterBand>
            <FooterColumns>
              <ContactCol>
                <FooterPill $height={28} $below={3}>contactgegevens</FooterPill>
                <FooterPill $height={27} $size={8.5} $color="#5a50d8">
                  telefoonnummer 02/251.51.51
                </FooterPill>
                <FooterPill $height={27} $size={8.5} $color="#5a50d8">
                  directie
                </FooterPill>
                <FooterPill $height={27} $size={8.5} $color="#5a50d8">
                  secretariaat
                </FooterPill>
              </ContactCol>
              <HoursCol>
                <FooterPill $height={43}>
                  openingsuren
                  <br />
                  secretariaat
                </FooterPill>
                <HoursCard>
                  <div>
                    <Hours rows={OFFICE_HOURS} />
                  </div>
                </HoursCard>
              </HoursCol>
              <SubscribeCol>
                <FooterPill $height={26} $width="136px" $left={4} $size={10.5}>
                  Subscribe
                </FooterPill>
                <EmailInput placeholder="Enter your email" />
                <SubscribeButton type="button">Subscribe</SubscribeButton>
              </SubscribeCol>
            </FooterColumns>
            <MapArea>
              <MapFrame>
                <MapDrawing />
              </MapFrame>
              <MapFoot>
                <SovBadge>Sov</SovBadge>
                <AddressLabel>Adress</AddressLabel>
              </MapFoot>
            </MapArea>
          </Footer>
          <ActivateNote>
            <ActivateTitle>Activeer Windows</ActivateTitle>
            <ActivateText>Ga naar Instellingen om Windows te activeren.</ActivateText>
          </ActivateNote>
        </Page>
        <Scrollbar>
          <ScrollUp />
          <ScrollThumb />
          <ScrollDown />
        </Scrollbar>
      </Viewport>

      <Taskbar>
        <StartButton>
          <WinLogo />
        </StartButton>
        <SearchBox>
          <Search size={18} strokeWidth={1.3} style={{ transform: 'scaleX(-1)' }} />
          Typ hier om te zoeken
        </SearchBox>
        <TaskItem>
          <svg width="17" height="17" viewBox="0 0 17 17" fill="none" stroke="#fff" strokeWidth="1.800">
            <circle cx="8.500" cy="8.500" r="7" />
          </svg>
        </TaskItem>
        <TaskItem>
          <TaskView />
        </TaskItem>
        <TaskItem>
          <StoreIcon />
        </TaskItem>
        <TaskItem>
          <MailIcon />
        </TaskItem>
        <TaskItem>
          <FirefoxIcon />
        </TaskItem>
        <TaskItem $running>
          <FolderIcon />
        </TaskItem>
        <TaskItem $running>
          <ChromeIcon />
        </TaskItem>
        <TaskItem $running $active>
          <EdgeIcon />
        </TaskItem>
        <TaskItem $running>
          <VsCodeIcon />
        </TaskItem>
        <TaskItem $running>
          <GithubIcon />
        </TaskItem>
        <TaskItem $running>
          <WordIcon />
        </TaskItem>
        <Tray>
          <CloudIcon />
          <TrayText $left={10}>17°C</TrayText>
          <TrayText $left={9}>Meest bewolkt</TrayText>
          <TrayIcon $left={13}>
            <ChevronUp size={18} strokeWidth={1.3} />
          </TrayIcon>
          <TrayIcon $left={6}>
            <TrayMeet />
          </TrayIcon>
          <TrayIcon $left={7}>
            <TrayNetwork />
          </TrayIcon>
          <TrayIcon $left={6}>
            <Volume1 size={17} strokeWidth={1.2} />
          </TrayIcon>
          <TrayText $left={10} $size={12}>
            NLD
          </TrayText>
          <Clock>
            16:28
            <br />
            3/05/2022
          </Clock>
          <NotifyWrap>
            <svg width="18" height="15" viewBox="0 0 18 15" fill="#fff">
              <path d="M0 0h18v12H7l-3 3v-3H0z" />
            </svg>
            <NotifyCount>8</NotifyCount>
          </NotifyWrap>
        </Tray>
      </Taskbar>
    </Screen>
  );
};

export default App;
